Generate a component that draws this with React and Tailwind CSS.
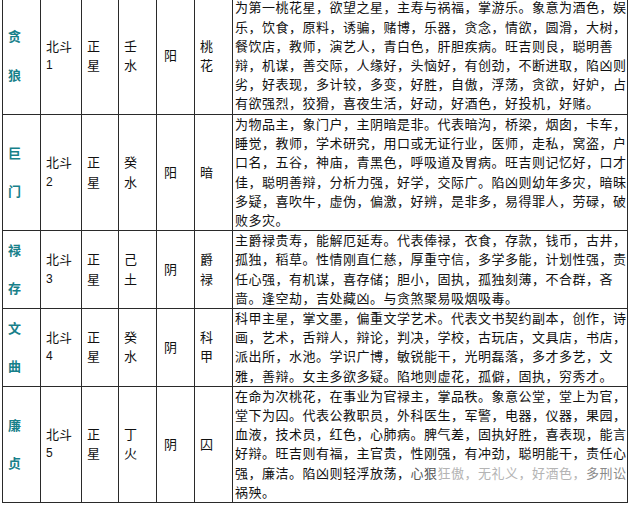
import React from "react";

const rows = [
  {
    name: ["贪", "狼"],
    dou: "1",
    yin: "阳",
    wx: ["壬", "水"],
    hua: ["桃", "花"],
    h: "h-[117px]",
    lines: [
      "为第一桃花星，欲望之星，主寿与祸福，掌游乐。象意为酒色，娱",
      "乐，饮食，原料，诱骗，赌博，乐器，贪念，情欲，圆滑，大树，",
      "餐饮店，教师，演艺人，青白色，肝胆疾病。旺吉则良，聪明善",
      "辩，机谋，善交际，人缘好，头恼好，有创劲，不断进取，陷凶则",
      "劣，好表现，多计较，多变，好胜，自傲，浮荡，贪欲，好妒，占",
      "有欲强烈，狡猾，喜夜生活，好动，好酒色，好投机，好赌。",
    ],
  },
  {
    name: ["巨", "门"],
    dou: "2",
    yin: "阳",
    wx: ["癸", "水"],
    hua: ["暗"],
    h: "h-[115px]",
    lines: [
      "为物品主，象门户，主阴暗是非。代表暗沟，桥梁，烟囱，卡车，",
      "睡觉，教师，学术研究，用口或无证行业，医师，走私，窝盗，户",
      "口名，五谷，神庙，青黑色，呼吸道及胃病。旺吉则记忆好，口才",
      "佳，聪明善辩，分析力强，好学，交际广。陷凶则幼年多灾，暗昧",
      "多疑，喜吹牛，虚伪，偏激，好辨，是非多，易得罪人，劳碌，破",
      "败多灾。",
    ],
  },
  {
    name: ["禄", "存"],
    dou: "3",
    yin: "阴",
    wx: ["己", "土"],
    hua: ["爵", "禄"],
    h: "h-[77px]",
    lines: [
      "主爵禄贵寿，能解厄延寿。代表俸禄，衣食，存款，钱币，古井，",
      "孤独，稻草。性情刚直仁慈，厚重守信，多学多能，计划性强，责",
      "任心强，有机谋，喜存储；胆小，固执，孤独刻薄，不合群，吝",
      "啬。逢空劫，吉处藏凶。与贪煞聚易吸烟吸毒。",
    ],
  },
  {
    name: ["文", "曲"],
    dou: "4",
    yin: "阴",
    wx: ["癸", "水"],
    hua: ["科", "甲"],
    h: "h-[76px]",
    lines: [
      "科甲主星，掌文墨，偏重文学艺术。代表文书契约副本，创作，诗",
      "画，艺术，舌辩人，辩论，判决，学校，古玩店，文具店，书店，",
      "派出所，水池。学识广博，敏锐能干，光明磊落，多才多艺，文",
      "雅，善辩。女主多欲多疑。陷地则虚花，孤僻，固执，穷秀才。",
    ],
  },
  {
    name: ["廉", "贞"],
    dou: "5",
    yin: "阴",
    wx: ["丁", "火"],
    hua: ["囚"],
    h: "h-[115px]",
    lines: [
      "在命为次桃花，在事业为官禄主，掌品秩。象意公堂，堂上为官，",
      "堂下为囚。代表公教职员，外科医生，军警，电器，仪器，果园，",
      "血液，技术员，红色，心肺病。脾气差，固执好胜，喜表现，能言",
      "好辩。旺吉则有福，主官贵，性刚强，有冲劲，聪明能干，责任心",
      "WATERMARK",
      "祸殃。",
    ],
  },
];

function Lines({ items }) {
  return (
    <div className="flex flex-col">
      {items.map((t, i) => (
        <span key={i} className="block">
          {t}
        </span>
      ))}
    </div>
  );
}

const cell = "border border-[#2a2a2a] align-middle p-0 pl-[5px] text-left";

export default function App() {
  return (
    <div className="w-[630px] h-[505px] overflow-hidden bg-white text-[#111]">
      <table
        className="ml-[2px] mt-[-3px] border-collapse table-fixed text-[13px] leading-[19.2px]"
        style={{ fontFamily: '"Liberation Sans", "Noto Sans CJK SC", sans-serif' }}
      >
        <colgroup>
          <col className="w-[38px]" />
          <col className="w-[41px]" />
          <col className="w-[37px]" />
          <col className="w-[38px]" />
          <col className="w-[38px]" />
          <col className="w-[38px]" />
          <col className="w-[395px]" />
        </colgroup>
        <tbody>
          {rows.map((r, i) => (
            <tr key={i} className={r.h}>
              <td className={cell}>
                <div className="flex flex-col font-bold text-[#17808a]">
                  <span>{r.name[0]}</span>
                  <span>&nbsp;</span>
                  <span>{r.name[1]}</span>
                </div>
              </td>
              <td className={cell}>
                <div className="flex flex-col">
                  <span>北斗</span>
                  <span className="text-[12px]">{r.dou}</span>
                </div>
              </td>
              <td className={cell}>
                <Lines items={["正", "星"]} />
              </td>
              <td className={cell}>
                <Lines items={r.wx} />
              </td>
              <td className={cell + " pl-[7px]"}>
                <Lines items={[r.yin]} />
              </td>
              <td className={cell}>
                <Lines items={r.hua} />
              </td>
              <td className="border border-[#2a2a2a] align-middle p-0 pl-[2px] tracking-[0.5px] whitespace-nowrap">
                <div className="flex flex-col">
                  {r.lines.map((t, j) =>
                    t === "WATERMARK" ? (
                      <span key={j} className="block">
                        强，廉洁。陷凶则轻浮放荡，
                        <span className="text-[#555]">心狠</span>
                        <span className="text-[#b4b4b4]">狂傲，无礼义，好酒色，</span>
                        <span className="text-[#8a8a8a]">多刑讼</span>
                      </span>
                    ) : (
                      <span key={j} className="block">
                        {t}
                      </span>
                    )
                  )}
                </div>
              </td>
            </tr>
          ))}
        </tbody>
      </table>
    </div>
  );
}
